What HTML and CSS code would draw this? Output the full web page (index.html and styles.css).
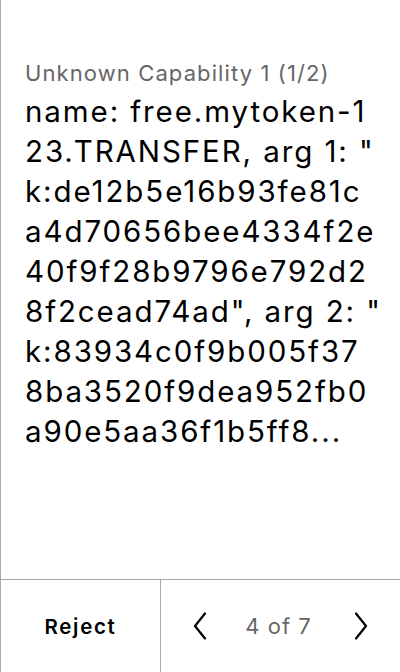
FILE: index.html
```html
<!DOCTYPE html>
<html>
<head>
<meta charset="utf-8">
<link rel="stylesheet" href="styles.css">
</head>
<body>
<div class="screen">
  <main class="content">
    <div class="label">Unknown Capability 1 (1/2)</div>
    <div class="value">name: free.mytoken-1<br>23.TRANSFER, arg 1: "<br>k:de12b5e16b93fe81c<br>a4d70656bee4334f2e<br>40f9f28b9796e792d2<br>8f2cead74ad", arg 2: "<br>k:83934c0f9b005f37<br>8ba3520f9dea952fb0<br>a90e5aa36f1b5ff8...</div>
  </main>
  <footer class="footer">
    <div class="reject">Reject</div>
    <div class="pager">
      <svg class="chev" width="14" height="28" viewBox="0 0 14 28"><path d="M12 1.5 L2 14 L12 26.5" fill="none" stroke="#000" stroke-width="2.2" stroke-linecap="round" stroke-linejoin="round"/></svg>
      <span class="count">4 of 7</span>
      <svg class="chev" width="14" height="28" viewBox="0 0 14 28"><path d="M2 1.5 L12 14 L2 26.5" fill="none" stroke="#000" stroke-width="2.2" stroke-linecap="round" stroke-linejoin="round"/></svg>
    </div>
  </footer>
</div>
</body>
</html>
```
FILE: styles.css
```css
html, body {
  margin: 0;
  padding: 0;
  background: #fff;
}
body {
  font-family: Inter, "Noto Sans", sans-serif;
  color: #000;
}
.screen {
  width: 400px;
  height: 672px;
  box-sizing: border-box;
  border-left: 1px solid #a8a8a8;
  display: flex;
  flex-direction: column;
}
.content {
  flex: 1;
  padding: 59px 0 0 24px;
}
.label {
  font-size: 22px;
  letter-spacing: 1.1px;
  color: #666;
  line-height: 28px;
}
.value {
  margin-top: 4px;
  font-size: 29.5px;
  letter-spacing: 1.9px;
  line-height: 40px;
  white-space: nowrap;
}
.footer {
  height: 92px;
  border-top: 1px solid #a8a8a8;
  display: flex;
}
.reject {
  width: 159px;
  border-right: 1px solid #a8a8a8;
  display: flex;
  align-items: center;
  justify-content: center;
  font-size: 20.5px;
  font-weight: 600;
  letter-spacing: 1.7px;
}
.pager {
  flex: 1;
  display: flex;
  align-items: center;
  justify-content: space-between;
  padding: 0 32px 0 32px;
}
.count {
  font-size: 22px;
  letter-spacing: 1px;
  color: #666;
  margin-right: 4px;
}
```
